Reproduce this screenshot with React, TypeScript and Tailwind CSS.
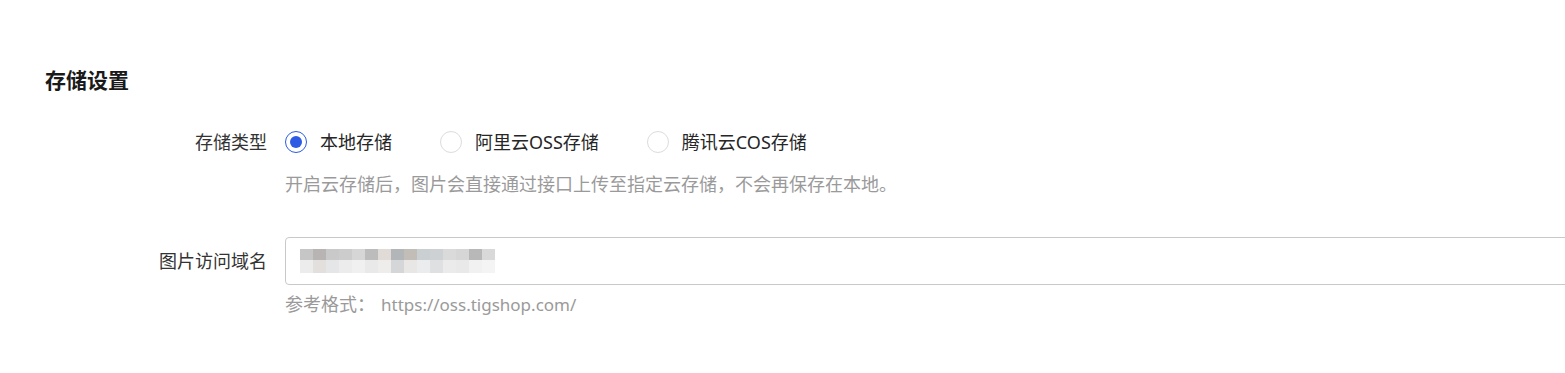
import { useState } from 'react'

const options = ['本地存储', '阿里云OSS存储', '腾讯云COS存储']

// blurred domain value, drawn as a mosaic
const mosaicTop = [
  'bg-[#c6c6c6]', 'bg-[#b9b4b4]', 'bg-[#c9c9c9]', 'bg-[#cccccc]', 'bg-[#d6d6d6]', 'bg-[#bcbcbc]',
  'bg-[#e0dbd6]', 'bg-[#b3b6b9]', 'bg-[#c2bdb7]', 'bg-[#cad0d2]', 'bg-[#ced1d3]', 'bg-[#dadada]',
  'bg-[#d6d6d6]', 'bg-[#b8b8b8]', 'bg-[#d9d9d9]',
]
const mosaicBottom = [
  'bg-[#ececec]', 'bg-[#e2dfdd]', 'bg-[#e4e6e8]', 'bg-[#ececec]', 'bg-[#f0f0f0]', 'bg-[#e9e9e9]',
  'bg-[#eeedec]', 'bg-[#d4d6d8]', 'bg-[#e9e7e5]', 'bg-[#eaeced]', 'bg-[#dfe0e1]', 'bg-[#ebebeb]',
  'bg-[#e9e9e9]', 'bg-[#f1f1f1]', 'bg-[#f4f4f4]',
]

export default function App() {
  const [storage, setStorage] = useState(0)

  return (
    <div className="w-full h-[373px] overflow-hidden bg-white text-[#333333] font-['Microsoft_YaHei','Noto_Sans','Noto_Sans_CJK_SC',sans-serif]">
      <div className="pl-[45px] pt-[65px]">
        <h2 className="text-[21px] leading-[30px] font-bold text-[#1a1a1a]">存储设置</h2>

        {/* 存储类型 */}
        <div className="flex mt-[29px]">
          <div className="w-[222px] shrink-0 text-right text-[18px] leading-[36px]">存储类型</div>
          <div className="ml-[18px]">
            <div className="flex items-center h-[36px] gap-[48px]">
              {options.map((opt, i) => (
                <label key={opt} className="flex items-center cursor-pointer" onClick={() => setStorage(i)}>
                  <span
                    className={
                      storage === i
                        ? 'w-[22px] h-[22px] rounded-full border border-[#2d5be3] flex items-center justify-center'
                        : 'w-[22px] h-[22px] rounded-full border border-[#dcdcdc] flex items-center justify-center'
                    }
                  >
                    {storage === i && <span className="w-[12px] h-[12px] rounded-full bg-[#2d5be3]" />}
                  </span>
                  <span className="ml-[13px] text-[18px] leading-[36px] text-[#262626]">{opt}</span>
                </label>
              ))}
            </div>
            <p className="mt-[10px] text-[18px] leading-[28px] text-[#9a9a9a]">
              开启云存储后，图片会直接通过接口上传至指定云存储，不会再保存在本地。
            </p>
          </div>
        </div>

        {/* 图片访问域名 */}
        <div className="flex mt-[39px]">
          <div className="w-[222px] shrink-0 text-right text-[18px] leading-[48px]">图片访问域名</div>
          <div className="ml-[18px]">
            <div className="w-[1320px] h-[48px] border border-[#c9c9cc] rounded-[4px] flex items-center pl-[14px]">
              <div className="flex flex-col">
                <div className="flex">
                  {mosaicTop.map((c, i) => (
                    <span key={i} className={`w-[13px] h-[11px] ${c}`} />
                  ))}
                </div>
                <div className="flex">
                  {mosaicBottom.map((c, i) => (
                    <span key={i} className={`w-[13px] h-[13px] ${c}`} />
                  ))}
                </div>
              </div>
            </div>
            <p className="mt-[5px] text-[18px] leading-[28px] text-[#9a9a9a]">
              参考格式：<span className="ml-[6px] text-[17px]">https://oss.tigshop.com/</span>
            </p>
          </div>
        </div>
      </div>
    </div>
  )
}
